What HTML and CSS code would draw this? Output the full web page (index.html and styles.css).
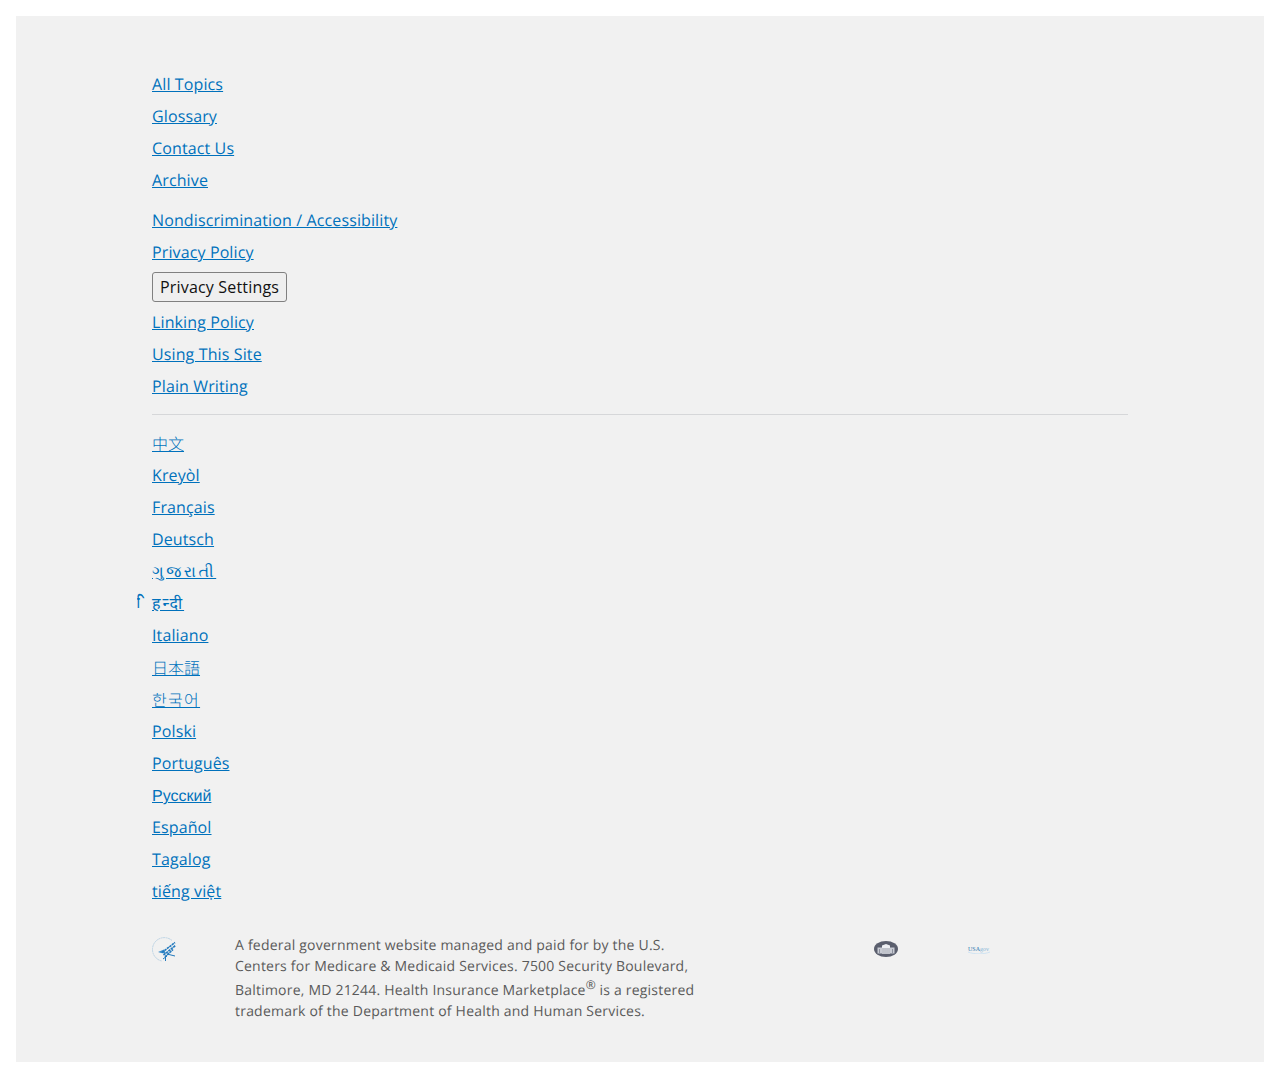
FILE: index.html
```html
<!DOCTYPE html>
<html lang="en">
<head>
  <meta charset="UTF-8" />
  <meta name="viewport" content="width=device-width, initial-scale=1.0"/>
  <title>Footer</title>
  <link rel="stylesheet" href="styles.css">
</head>
<body>
  <footer class="site-footer">
    <div class="footer-container">
      <ul class="link-list">
        <li><a href="#">All Topics</a></li>
        <li><a href="#">Glossary</a></li>
        <li><a href="#">Contact Us</a></li>
        <li><a href="#">Archive</a></li>
      </ul>
      <ul class="link-list second">
        <li><a href="#">Nondiscrimination / Accessibility</a></li>
        <li><a href="#">Privacy Policy</a></li>
        <li class="button-row"><button type="button">Privacy Settings</button></li>
        <li><a href="#">Linking Policy</a></li>
        <li><a href="#">Using This Site</a></li>
        <li><a href="#">Plain Writing</a></li>
      </ul>
      <hr class="divider">
      <ul class="link-list">
        <li><a href="#" lang="zh">中文</a></li>
        <li><a href="#">Kreyòl</a></li>
        <li><a href="#">Français</a></li>
        <li><a href="#">Deutsch</a></li>
        <li><a href="#" lang="gu">ગુજરાતી</a></li>
        <li class="hindi-row"><a href="#" lang="hi"><span class="hi-matra">&nbsp;ि</span>हन्दी</a></li>
        <li><a href="#">Italiano</a></li>
        <li><a href="#" lang="ja">日本語</a></li>
        <li><a href="#" lang="ko">한국어</a></li>
        <li><a href="#">Polski</a></li>
        <li><a href="#">Português</a></li>
        <li><a href="#" class="russian">Русский</a></li>
        <li><a href="#">Español</a></li>
        <li><a href="#">Tagalog</a></li>
        <li><a href="#">tiếng việt</a></li>
      </ul>
      <div class="legal">
        <svg class="hhs-logo" viewBox="0 0 25 25" width="25" height="25">
          <path d="M20 3.500A11.800 11.800 0 1 0 10 24" fill="none" stroke="#bcd3e4" stroke-width="1" stroke-dasharray="2 .5"/>
          <path d="M6 15l6-2.500 2 4-5-.5z" fill="#3f8fcb"/>
          <path d="M10 15.500L23 5.500M11.500 18L23.500 8.500M13 20l8-7.500" fill="none" stroke="#2379bd" stroke-width="1.600" stroke-dasharray="2.500 .6"/>
          <path d="M15 17l8 2M13.500 18.500v5.500M11 22l4-3" fill="none" stroke="#2379bd" stroke-width="1"/>
        </svg>
        <p class="legal-text">A federal government website managed and paid for by the U.S. Centers for Medicare &amp; Medicaid Services. 7500 Security Boulevard, Baltimore, MD 21244. Health Insurance Marketplace<sup>®</sup> is a registered trademark of the Department of Health and Human Services.</p>
        <div class="partner-logos">
          <svg class="wh-logo" viewBox="0 0 24 16" width="24" height="16">
            <ellipse cx="12" cy="8" rx="12" ry="8" fill="#5b5f6e"/>
            <path d="M3.500 6.500h17v6h-17z" fill="#c9ccd4"/>
            <path d="M8 4.500l4-1.500 4 1.500v8H8z" fill="#eef0f4"/>
            <path d="M5.500 8v4M9 7v5M11 7v5M13 7v5M15 7v5M18.500 8v4" stroke="#7c8090" stroke-width=".8"/>
          </svg>
          <svg class="usa-logo" viewBox="0 0 24 10" width="24" height="10">
            <path d="M1 8c6 2.500 16 2.500 22 0" fill="none" stroke="#cfe3f2" stroke-width="1"/>
            <text x="1" y="7" class="usa-text">USA<tspan class="usa-gov">gov</tspan></text>
          </svg>
        </div>
      </div>
    </div>
  </footer>
</body>
</html>
```

FILE: styles.css
```css
body {
  margin: 16px;
  background-color: #fff;
  font-family: 'Open Sans', 'Noto Sans', 'Noto Sans CJK SC', sans-serif;
  font-size: 16px;
  letter-spacing: .12px;
  color: #212121;
  text-rendering: geometricPrecision;
}

.site-footer {
  background-color: #f1f1f1;
  height: 1046px;
  padding-top: 52px;
  box-sizing: border-box;
}

.footer-container {
  width: 976px;
  margin: 0 auto;
}

.link-list {
  list-style: none;
  margin: 0;
  padding: 0;
}

.link-list.second {
  margin-top: 8px;
}

.link-list li {
  height: 32px;
  line-height: 32px;
}

.link-list a {
  color: #0071bc;
}

.link-list .russian {
  font-family: 'Liberation Sans', sans-serif;
  letter-spacing: 0;
}

.link-list a[lang="zh"],
.link-list a[lang="ja"] {
  font-family: 'Noto Sans CJK SC', sans-serif;
  font-weight: 300;
  letter-spacing: 0;
}

.link-list a[lang="ko"] {
  font-family: 'Noto Sans CJK KR', sans-serif;
  font-weight: 300;
  letter-spacing: 1.3px;
}

.link-list a[lang="gu"] {
  letter-spacing: 2.500px;
}

.link-list a[lang="hi"] {
  letter-spacing: 2px;
}

.link-list .hindi-row {
  position: relative;
}

.hi-matra {
  position: absolute;
  left: -15px;
  top: -1px;
  display: inline-block;
  font-weight: 700;
  letter-spacing: 0;
  color: #0071bc;
  transform: scaleX(.55);
  transform-origin: left center;
}

.link-list .button-row {
  height: 38px;
  padding-top: 4px;
  box-sizing: border-box;
  line-height: normal;
}

button {
  display: block;
  height: 30px;
  padding: 0 7px;
  background-color: #efefef;
  border: 1px solid #808080;
  border-radius: 3px;
  color: #111;
  font: inherit;
  letter-spacing: .18px;
}

.divider {
  height: 1px;
  margin: 12px 0;
  border: none;
  background-color: #d6d7d9;
}

.legal {
  display: grid;
  grid-template-columns: 83px 480px 1fr;
  margin-top: 28px;
}

.hhs-logo {
  display: block;
  margin-top: 2px;
}

.legal-text {
  margin: 0;
  color: #5a5a5a;
  font-size: 14px;
  line-height: 21px;
  letter-spacing: .21px;
}

.legal-text sup {
  font-size: 12px;
  line-height: 15px;
  letter-spacing: 0;
}

.partner-logos {
  display: flex;
  align-items: center;
  gap: 69px;
  height: 24px;
  margin-top: 2px;
  margin-left: 159px;
}

.usa-text {
  font-family: 'Liberation Serif', serif;
  font-size: 6px;
  fill: #2c78b0;
  letter-spacing: 0;
}

.usa-gov {
  fill: #7fb2d6;
}
```
